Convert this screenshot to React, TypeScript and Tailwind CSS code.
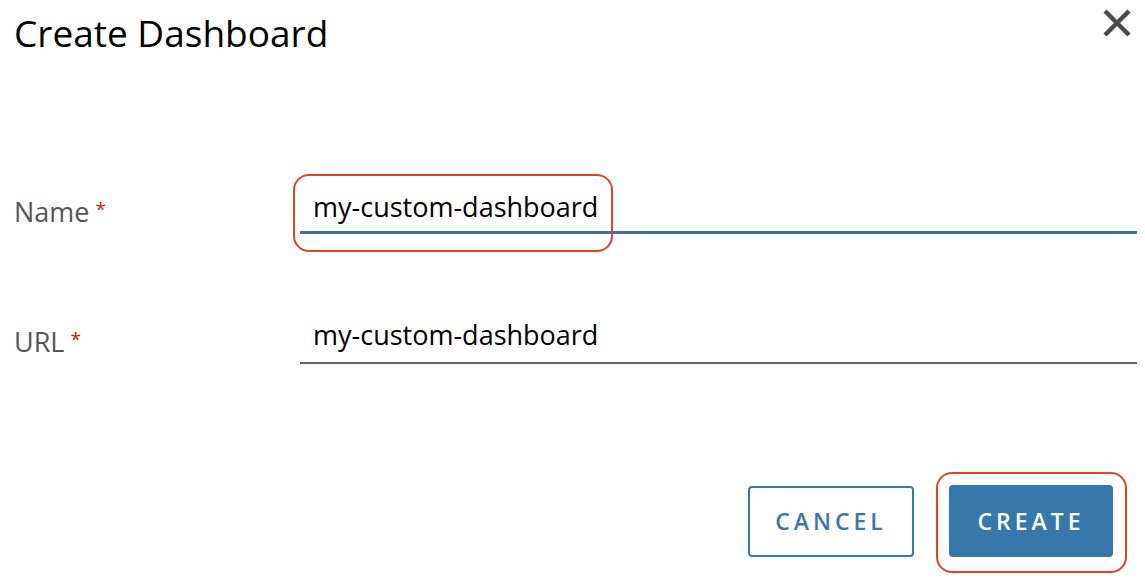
import React from "react";

export default function App() {
  return (
    <div
      className="relative w-[1145px] h-[581px] bg-white overflow-hidden"
      style={{ fontFamily: "'Open Sans', 'Liberation Sans', sans-serif" }}
    >
      <div className="flex items-start justify-between pl-[14px] pr-[14px]">
        <h1 className="mt-[13px] text-[37px] leading-[40px] text-black font-normal">Create Dashboard</h1>
        <button className="mt-[9px] w-[28px] h-[28px] flex items-center justify-center">
          <svg width="28" height="28" viewBox="0 0 28 28">
            <path d="M2 2 L26 26 M26 2 L2 26" stroke="#4a4a4a" strokeWidth="4.5" strokeLinecap="butt" />
          </svg>
        </button>
      </div>

      <div className="flex flex-col pl-[14px] pr-[8px] mt-[139px]">
        <div className="flex items-start">
          <label className="w-[286px] mt-[5px] text-[27px] leading-[30px] text-[#565656]">
            Name
            <span className="ml-[6px] text-[19px] leading-[24px] align-top text-[#c92100]">*</span>
          </label>
          <div className="flex-1 border-b-[3px] border-[#3677a8] pl-[13px] pb-[9px] text-[27px] leading-[30px] text-black">
            my-custom-dashboard
          </div>
        </div>
        <div className="flex items-start mt-[86px]">
          <label className="w-[286px] mt-[7px] text-[27px] leading-[30px] text-[#565656]">
            URL
            <span className="ml-[6px] text-[19px] leading-[24px] align-top text-[#c92100]">*</span>
          </label>
          <div className="flex-1 border-b-[2px] border-[#666666] pl-[13px] pb-[12px] text-[27px] leading-[30px] text-black">
            my-custom-dashboard
          </div>
        </div>
      </div>

      <div className="flex items-end justify-end gap-[35px] pr-[32px] mt-[121px]">
        <button className="w-[166px] h-[71px] border-2 border-[#3a78aa] rounded-[4px] text-[#3a78aa] text-[23px] tracking-[4px] font-semibold bg-white">
          CANCEL
        </button>
        <button className="w-[164px] h-[72px] rounded-[4px] bg-[#3778ab] text-white text-[23px] tracking-[4px] font-semibold">
          CREATE
        </button>
      </div>

      <div className="absolute left-[293px] top-[174px] w-[320px] h-[78px] border-2 border-[#e0452a] rounded-[16px] pointer-events-none" />
      <div className="absolute left-[936px] top-[472px] w-[191px] h-[101px] border-2 border-[#e0452a] rounded-[16px] pointer-events-none" />
    </div>
  );
}
